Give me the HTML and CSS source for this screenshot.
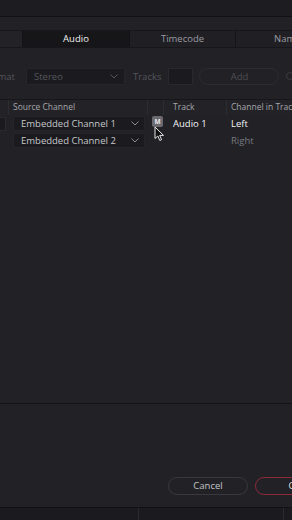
FILE: index.html
```html
<!DOCTYPE html>
<html>
<head>
<meta charset="utf-8">
<link rel="stylesheet" href="styles.css">
</head>
<body>
<div class="screen">
  <div class="topbar"></div>
  <div class="panel">
    <div class="tabs">
      <div class="tab tab-lead"></div>
      <div class="tab active">Audio</div>
      <div class="tab">Timecode</div>
      <div class="tab tab-name">Name</div>
    </div>
    <div class="format-row">
      <span class="lbl lbl-format">Format</span>
      <div class="select select-stereo">Stereo<svg class="chev" width="8" height="5" viewBox="0 0 8 5"><path d="M0.5 0.5 L4 4 L7.5 0.5" fill="none" stroke="currentColor" stroke-width="1"/></svg></div>
      <span class="lbl">Tracks</span>
      <div class="num-box"></div>
      <div class="btn-add">Add</div>
      <div class="gear"></div>
    </div>
    <div class="table">
      <div class="thead">
        <div class="col c0"></div>
        <div class="col c1">Source Channel</div>
        <div class="col c2"></div>
        <div class="col c3">Track</div>
        <div class="col c4">Channel in Track</div>
      </div>
      <div class="trow">
        <div class="col c0"><div class="stub"></div></div>
        <div class="col c1"><div class="select select-ch">Embedded Channel 1<svg class="chev" width="8" height="5" viewBox="0 0 8 5"><path d="M0.5 0.5 L4 4 L7.5 0.5" fill="none" stroke="currentColor" stroke-width="1"/></svg></div></div>
        <div class="col c2"><div class="mbtn">M</div></div>
        <div class="col c3 strong">Audio 1</div>
        <div class="col c4 strong">Left</div>
      </div>
      <div class="trow">
        <div class="col c0"></div>
        <div class="col c1"><div class="select select-ch">Embedded Channel 2<svg class="chev" width="8" height="5" viewBox="0 0 8 5"><path d="M0.5 0.5 L4 4 L7.5 0.5" fill="none" stroke="currentColor" stroke-width="1"/></svg></div></div>
        <div class="col c2"></div>
        <div class="col c3"></div>
        <div class="col c4 dim">Right</div>
      </div>
    </div>
    <div class="spacer"></div>
    <div class="footer">
      <div class="btn-cancel">Cancel</div>
      <div class="btn-create">OK</div>
    </div>
  </div>
  <div class="bottom">
    <div class="b1"></div>
    <div class="b2"></div>
    <div class="b3"></div>
  </div>
  <svg class="cursor" width="12" height="16" viewBox="0 0 12 16"><path d="M1 1 L1 12.5 L3.8 10 L5.8 14.5 L7.6 13.7 L5.7 9.4 L9.5 9.4 Z" fill="#111" stroke="#e8e8e8" stroke-width="1" stroke-linejoin="round"/></svg>
</div>
</body>
</html>
```
FILE: styles.css
```css
* { box-sizing: border-box; }
html, body { margin: 0; padding: 0; }
body {
  width: 292px;
  height: 520px;
  overflow: hidden;
  background: #1f1f24;
  font-family: "Open Sans", "Noto Sans", sans-serif;
  color: #c9c9cc;
}
.screen {
  position: relative;
  width: 292px;
  height: 520px;
  display: flex;
  flex-direction: column;
  overflow: hidden;
}
.topbar {
  height: 17px;
  background: #1c1c21;
  border-bottom: 1px solid #111114;
  flex: none;
}
.panel {
  flex: 1;
  display: flex;
  flex-direction: column;
  background: #212126;
  border-bottom: 1px solid #111114;
}
.tabs {
  margin-top: 13px;
  height: 18px;
  display: flex;
  background: #1f1f24;
  border-top: 1px solid #17171b;
  border-bottom: 1px solid #17171b;
  flex: none;
  overflow: hidden;
}
.tab {
  flex: none;
  font-size: 9.5px;
  line-height: 16px;
  text-align: center;
  color: #9a9aa0;
  border-right: 1px solid #141417;
}
.tab-lead { width: 23px; background: #222227; }
.tab.active { width: 107px; background: #161618; color: #f2f2f2; }
.tab:nth-child(3) { width: 106px; }
.tab-name { width: 80px; text-align: left; padding-left: 38px; border-right: none; }

.format-row {
  margin-top: 19px;
  height: 18px;
  display: flex;
  align-items: center;
  font-size: 9.5px;
  color: #55555b;
  flex: none;
  white-space: nowrap;
}
.lbl { flex: none; }
.lbl-format { margin-left: -17px; width: 43px; }
.select {
  display: flex;
  align-items: center;
  justify-content: space-between;
  background: #1b1b1f;
  border: 1px solid #25252a;
  border-radius: 2px;
  flex: none;
}
.select-stereo {
  width: 99px;
  height: 17px;
  padding: 0 6px 0 7px;
  color: #55555b;
  margin-right: 8px;
}
.chev { flex: none; color: #8a8a90; }
.select-stereo .chev { color: #55555b; }
.num-box {
  width: 25px;
  height: 17px;
  margin-left: 7px;
  background: #1b1b1f;
  border: 1px solid #28282d;
  flex: none;
}
.btn-add {
  width: 80px;
  height: 17px;
  margin-left: 6px;
  border: 1px solid #2c2c31;
  border-radius: 9px;
  text-align: center;
  line-height: 15px;
  color: #4d4d53;
  flex: none;
}
.gear {
  width: 8px;
  height: 8px;
  margin-left: 7px;
  border: 1.5px solid #3a3a40;
  border-radius: 50%;
  flex: none;
}

.table {
  margin-top: 14px;
  display: flex;
  flex-direction: column;
  flex: none;
}
.thead, .trow {
  display: flex;
  white-space: nowrap;
}
.thead {
  height: 16px;
  font-size: 8.5px;
  color: #a6a6ab;
  background: #222227;
  border-top: 1px solid #17171b;
}
.thead .col { line-height: 14px; border-right: 1px solid #2c2c31; }
.thead .c4 { border-right: none; }
.col { flex: none; overflow: hidden; }
.c0 { width: 9px; }
.c1 { width: 139px; padding-left: 4px; }
.c2 { width: 16px; padding-left: 4px; }
.c3 { width: 63px; padding-left: 9px; }
.c4 { width: 65px; padding-left: 4px; }
.thead .c2 { width: 16px; }
.trow {
  height: 17px;
  font-size: 9.5px;
  align-items: center;
}
.trow .col { display: flex; align-items: center; height: 17px; }
.stub {
  width: 7px;
  height: 14px;
  margin-left: -1px;
  background: #1b1b1f;
  border: 1px solid #2a2a2f;
}
.select-ch {
  width: 132px;
  height: 15px;
  padding: 0 5px 0 7px;
  color: #c6c6ca;
  font-size: 9.5px;
}
.mbtn {
  width: 11px;
  height: 11px;
  background: #6a6a70;
  border-radius: 2px;
  color: #e8e8ea;
  font-size: 6.5px;
  font-weight: 700;
  text-align: center;
  line-height: 11px;
  margin-top: -4px;
}
.strong { color: #f4f4f6; font-weight: 500; }
.dim { color: #7a7a80; }

.spacer { flex: 1; }
.footer {
  height: 104px;
  border-top: 1px solid #141417;
  display: flex;
  align-items: flex-start;
  padding-top: 73px;
  padding-left: 168px;
  gap: 7px;
  flex: none;
  overflow: hidden;
}
.btn-cancel, .btn-create {
  flex: none;
  height: 18px;
  border-radius: 9px;
  font-size: 9.5px;
  line-height: 16px;
  text-align: center;
}
.btn-cancel {
  width: 80px;
  border: 1px solid #38383e;
  color: #c4c4c8;
}
.btn-create {
  width: 80px;
  border: 1.5px solid #8c2b38;
  color: #e0e0e2;
}
.bottom {
  height: 12px;
  display: flex;
  background: #1b1b1f;
  flex: none;
}
.b1 { width: 139px; border-right: 1px solid #2a2a2f; }
.b2 { width: 145px; border-right: 1px solid #2a2a2f; }
.b3 { flex: 1; }
.cursor {
  position: absolute;
  left: 154px;
  top: 126px;
}
```
